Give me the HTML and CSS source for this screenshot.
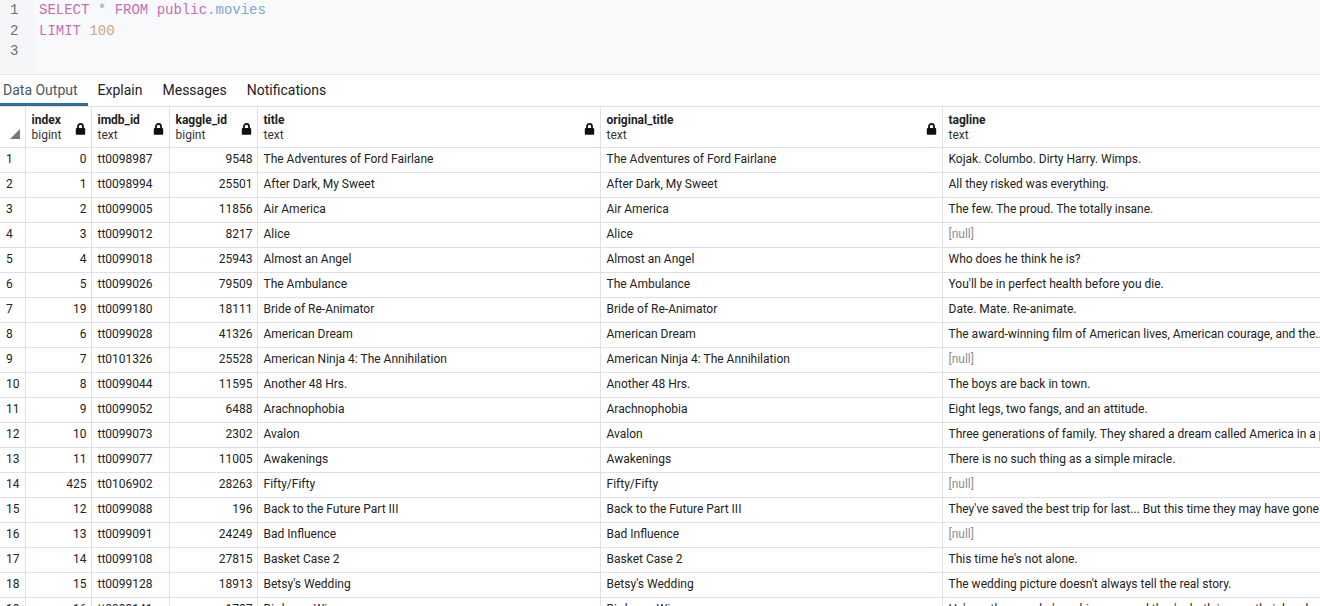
FILE: index.html
```html
<!DOCTYPE html>
<html>
<head>
<meta charset="utf-8">
<link rel="stylesheet" href="styles.css">
</head>
<body>
<div class="app">
  <div class="editor">
    <div class="gutter">
      <div class="ln">1</div>
      <div class="ln">2</div>
      <div class="ln">3</div>
    </div>
    <div class="code">
      <div class="cl"><span class="kw">SELECT</span> <span class="op">*</span> <span class="kw">FROM</span> <span class="kw">public</span><span class="id">.movies</span></div>
      <div class="cl"><span class="kw">LIMIT</span> <span class="num">100</span></div>
      <div class="cl">&nbsp;</div>
    </div>
  </div>
  <div class="tabs">
    <div class="tab tab-first active">Data Output</div>
    <div class="tab">Explain</div>
    <div class="tab">Messages</div>
    <div class="tab">Notifications</div>
  </div>
  <div class="gridwrap">
    <table class="grid">
      <colgroup>
        <col class="c-rn"><col class="c-idx"><col class="c-imdb"><col class="c-kag"><col class="c-title"><col class="c-orig"><col class="c-tag">
      </colgroup>
      <thead>
        <tr>
          <th class="corner"><svg class="tri" width="10" height="10" viewBox="0 0 10 10"><polygon points="10,0 10,10 0,10" fill="#777"/></svg></th>
          <th><div class="hc"><div class="hn"><b>index</b><span>bigint</span></div><svg class="lock" width="11" height="13" viewBox="0 0 11 13"><path d="M3 6.5V4.3a2.5 2.5 0 0 1 5 0v2.2" fill="none" stroke="#111" stroke-width="1.8"/><rect x="0.8" y="6" width="9.4" height="6.8" rx="1" fill="#111"/></svg></div></th>
          <th><div class="hc"><div class="hn"><b>imdb_id</b><span>text</span></div><svg class="lock" width="11" height="13" viewBox="0 0 11 13"><path d="M3 6.5V4.3a2.5 2.5 0 0 1 5 0v2.2" fill="none" stroke="#111" stroke-width="1.8"/><rect x="0.8" y="6" width="9.4" height="6.8" rx="1" fill="#111"/></svg></div></th>
          <th><div class="hc"><div class="hn"><b>kaggle_id</b><span>bigint</span></div><svg class="lock" width="11" height="13" viewBox="0 0 11 13"><path d="M3 6.5V4.3a2.5 2.5 0 0 1 5 0v2.2" fill="none" stroke="#111" stroke-width="1.8"/><rect x="0.8" y="6" width="9.4" height="6.8" rx="1" fill="#111"/></svg></div></th>
          <th><div class="hc"><div class="hn"><b>title</b><span>text</span></div><svg class="lock" width="11" height="13" viewBox="0 0 11 13"><path d="M3 6.5V4.3a2.5 2.5 0 0 1 5 0v2.2" fill="none" stroke="#111" stroke-width="1.8"/><rect x="0.8" y="6" width="9.4" height="6.8" rx="1" fill="#111"/></svg></div></th>
          <th><div class="hc"><div class="hn"><b>original_title</b><span>text</span></div><svg class="lock" width="11" height="13" viewBox="0 0 11 13"><path d="M3 6.5V4.3a2.5 2.5 0 0 1 5 0v2.2" fill="none" stroke="#111" stroke-width="1.8"/><rect x="0.8" y="6" width="9.4" height="6.8" rx="1" fill="#111"/></svg></div></th>
          <th><div class="hc"><div class="hn"><b>tagline</b><span>text</span></div></div></th>
        </tr>
      </thead>
      <tbody>
        <tr><td class="rn">1</td><td class="r">0</td><td>tt0098987</td><td class="r">9548</td><td>The Adventures of Ford Fairlane</td><td>The Adventures of Ford Fairlane</td><td>Kojak. Columbo. Dirty Harry. Wimps.</td></tr>
        <tr><td class="rn">2</td><td class="r">1</td><td>tt0098994</td><td class="r">25501</td><td>After Dark, My Sweet</td><td>After Dark, My Sweet</td><td>All they risked was everything.</td></tr>
        <tr><td class="rn">3</td><td class="r">2</td><td>tt0099005</td><td class="r">11856</td><td>Air America</td><td>Air America</td><td>The few. The proud. The totally insane.</td></tr>
        <tr><td class="rn">4</td><td class="r">3</td><td>tt0099012</td><td class="r">8217</td><td>Alice</td><td>Alice</td><td class="null">[null]</td></tr>
        <tr><td class="rn">5</td><td class="r">4</td><td>tt0099018</td><td class="r">25943</td><td>Almost an Angel</td><td>Almost an Angel</td><td>Who does he think he is?</td></tr>
        <tr><td class="rn">6</td><td class="r">5</td><td>tt0099026</td><td class="r">79509</td><td>The Ambulance</td><td>The Ambulance</td><td>You'll be in perfect health before you die.</td></tr>
        <tr><td class="rn">7</td><td class="r">19</td><td>tt0099180</td><td class="r">18111</td><td>Bride of Re-Animator</td><td>Bride of Re-Animator</td><td>Date. Mate. Re-animate.</td></tr>
        <tr><td class="rn">8</td><td class="r">6</td><td>tt0099028</td><td class="r">41326</td><td>American Dream</td><td>American Dream</td><td>The award-winning film of American lives, American courage, and the...</td></tr>
        <tr><td class="rn">9</td><td class="r">7</td><td>tt0101326</td><td class="r">25528</td><td>American Ninja 4: The Annihilation</td><td>American Ninja 4: The Annihilation</td><td class="null">[null]</td></tr>
        <tr><td class="rn">10</td><td class="r">8</td><td>tt0099044</td><td class="r">11595</td><td>Another 48 Hrs.</td><td>Another 48 Hrs.</td><td>The boys are back in town.</td></tr>
        <tr><td class="rn">11</td><td class="r">9</td><td>tt0099052</td><td class="r">6488</td><td>Arachnophobia</td><td>Arachnophobia</td><td>Eight legs, two fangs, and an attitude.</td></tr>
        <tr><td class="rn">12</td><td class="r">10</td><td>tt0099073</td><td class="r">2302</td><td>Avalon</td><td>Avalon</td><td>Three generations of family. They shared a dream called America in a place called home.</td></tr>
        <tr><td class="rn">13</td><td class="r">11</td><td>tt0099077</td><td class="r">11005</td><td>Awakenings</td><td>Awakenings</td><td>There is no such thing as a simple miracle.</td></tr>
        <tr><td class="rn">14</td><td class="r">425</td><td>tt0106902</td><td class="r">28263</td><td>Fifty/Fifty</td><td>Fifty/Fifty</td><td class="null">[null]</td></tr>
        <tr><td class="rn">15</td><td class="r">12</td><td>tt0099088</td><td class="r">196</td><td>Back to the Future Part III</td><td>Back to the Future Part III</td><td>They've saved the best trip for last... But this time they may have gone too far.</td></tr>
        <tr><td class="rn">16</td><td class="r">13</td><td>tt0099091</td><td class="r">24249</td><td>Bad Influence</td><td>Bad Influence</td><td class="null">[null]</td></tr>
        <tr><td class="rn">17</td><td class="r">14</td><td>tt0099108</td><td class="r">27815</td><td>Basket Case 2</td><td>Basket Case 2</td><td>This time he's not alone.</td></tr>
        <tr><td class="rn">18</td><td class="r">15</td><td>tt0099128</td><td class="r">18913</td><td>Betsy's Wedding</td><td>Betsy's Wedding</td><td>The wedding picture doesn't always tell the real story.</td></tr>
        <tr><td class="rn">19</td><td class="r">16</td><td>tt0099141</td><td class="r">1787</td><td>Bird on a Wire</td><td>Bird on a Wire</td><td>He's on the run, she's on his case, and they're both in over their heads.</td></tr>
      </tbody>
    </table>
  </div>
</div>
</body>
</html>
```

FILE: styles.css
```css
* { box-sizing: border-box; }
html, body { margin: 0; padding: 0; background: #fff; }
body { width: 1320px; height: 606px; overflow: hidden; font-family: Roboto, "Liberation Sans", sans-serif; color: #222; }
.app { width: 1320px; display: flex; flex-direction: column; }

.editor { display: flex; height: 75px; background: #f8f9fb; border-bottom: 1px solid #e3e5ea; }
.gutter { width: 34px; background: #f5f6f8; }
.ln { height: 20.5px; line-height: 20.5px; font-family: "Liberation Mono", monospace; font-size: 14px; color: #6b6f76; padding-left: 10px; }
.code { padding-left: 5px; }
.cl { height: 20.5px; line-height: 20.5px; font-family: "Liberation Mono", monospace; font-size: 14px; white-space: pre; }
.kw { color: #c46fb6; }
.op { color: #9aa0a8; }
.id { color: #7fa6cb; }
.num { color: #d0a67d; }

.tabs { display: flex; height: 31px; }
.tab { font-size: 14px; height: 31px; line-height: 31px; padding: 0 10px; color: #222; }
.tab-first { padding-left: 3px; }
.tab.active { color: #4a5563; box-shadow: inset 0 -3px 0 #336b99; }

.gridwrap { width: 1320px; overflow: hidden; border-top: 1px solid #dde0e6; }
.grid { border-collapse: collapse; table-layout: fixed; width: 1400px; font-size: 12px; }
.c-rn { width: 25px; }
.c-idx { width: 66px; }
.c-imdb { width: 78px; }
.c-kag { width: 88px; }
.c-title { width: 343px; }
.c-orig { width: 342px; }
.c-tag { width: 458px; }
.grid th, .grid td { border-left: 1px solid #dde0e6; border-bottom: 1px solid #dde0e6; padding: 0; white-space: nowrap; overflow: hidden; }
.grid th:first-child, .grid td:first-child { border-left: none; }
.grid th { height: 40px; text-align: left; font-weight: normal; vertical-align: middle; }
.corner { position: relative; }
.tri { position: absolute; left: 10px; bottom: 8px; }
.hc { display: flex; align-items: center; justify-content: space-between; padding: 2px 5px 0 6px; }
.hn { display: flex; flex-direction: column; line-height: 15px; }
.hn b { font-weight: bold; color: #222; }
.hn span { color: #333; }
.lock { flex: none; margin-top: 1px; }
.grid td { height: 25px; line-height: 22px; vertical-align: top; padding: 0 6px; color: #222; }
.grid td.r { text-align: right; padding-right: 4px; }
.grid td.rn { padding-left: 6px; }
.grid td.null { color: #8a8f96; }
```
